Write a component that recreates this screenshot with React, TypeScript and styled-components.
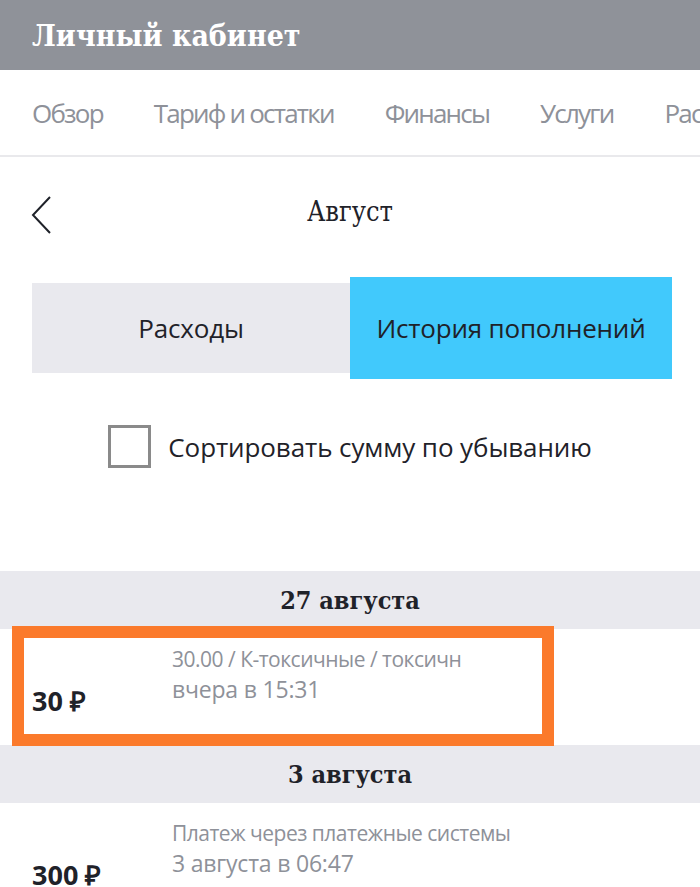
import React from "react";
import styled, { createGlobalStyle } from "styled-components";

const Global = createGlobalStyle`
  html, body { margin: 0; padding: 0; background: #ffffff; }
  body { font-family: "Open Sans", "Liberation Sans", sans-serif; color: #1f2229; overflow: hidden; }
  * { box-sizing: border-box; }
`;

const slab = `"DejaVu Serif Condensed", "DejaVu Serif", serif`;
const sans = `"Open Sans", "Liberation Sans", sans-serif`;

const Page = styled.div`
  width: 700px;
  height: 887px;
  overflow: hidden;
  display: flex;
  flex-direction: column;
`;

const Header = styled.header`
  height: 70px;
  flex: none;
  background: #8f9299;
  display: flex;
  align-items: center;
  padding-left: 32px;
`;

const HeaderTitle = styled.h1`
  margin: 0;
  font-family: ${slab};
  font-stretch: condensed;
  font-weight: 700;
  font-size: 30px;
  color: #ffffff;
  letter-spacing: 0;
`;

const Nav = styled.nav`
  height: 87px;
  flex: none;
  display: flex;
  align-items: center;
  gap: 51px;
  padding-left: 32px;
  border-bottom: 2px solid #e9e9ec;
  white-space: nowrap;
  overflow: hidden;
`;

const NavItem = styled.span`
  font-family: ${sans};
  font-size: 26px;
  color: #8e9199;
  letter-spacing: -1.8px;
`;

const TitleBar = styled.div`
  height: 120px;
  flex: none;
  display: flex;
  align-items: flex-start;
  justify-content: center;
  padding-top: 37px;
  position: relative;
`;

const BackButton = styled.button`
  position: absolute;
  left: 30px;
  top: 38px;
  background: none;
  border: 0;
  padding: 0;
  width: 24px;
  height: 40px;
  display: flex;
`;

const Title = styled.h2`
  margin: 0;
  font-family: ${slab};
  font-stretch: condensed;
  font-weight: 400;
  font-size: 27px;
  line-height: 36px;
  color: #1f2229;
`;

const Tabs = styled.div`
  margin: 0 28px 0 32px;
  display: grid;
  grid-template-columns: 318px 322px;
  align-items: center;
  height: 102px;
  flex: none;
`;

const Tab = styled.div<{ $active?: boolean }>`
  height: ${(p) => (p.$active ? "102px" : "90px")};
  background: ${(p) => (p.$active ? "#41c9fc" : "#e9e9ee")};
  display: flex;
  align-items: center;
  justify-content: center;
  font-family: ${sans};
  font-size: 26px;
  color: #1f2229;
  letter-spacing: -0.2px;
`;

const CheckRow = styled.label`
  margin-top: 46px;
  display: flex;
  align-items: center;
  justify-content: center;
  gap: 17px;
  flex: none;
`;

const Box = styled.span`
  width: 43px;
  height: 43px;
  border: 3px solid #8a8a8a;
  flex: none;
`;

const CheckText = styled.span`
  font-family: ${sans};
  font-size: 26px;
  color: #1f2229;
  letter-spacing: -0.1px;
`;

const Spacer = styled.div`
  height: 103px;
  flex: none;
`;

const DateBand = styled.div`
  height: 58px;
  flex: none;
  background: #e9e9ee;
  display: flex;
  align-items: center;
  justify-content: center;
  font-family: ${slab};
  font-stretch: condensed;
  font-weight: 700;
  font-size: 25px;
  color: #1f2229;
`;

const Row = styled.div`
  height: 116px;
  flex: none;
  position: relative;
  display: grid;
  grid-template-columns: 140px 1fr;
  padding: 16px 0 0 32px;
`;

const Amount = styled.div`
  align-self: start;
  padding-top: 37px;
  font-family: ${sans};
  font-weight: 700;
  font-size: 27px;
  color: #1f2229;
  letter-spacing: 0;
`;

const Details = styled.div`
  display: flex;
  flex-direction: column;
  color: #8e9199;
  font-family: ${sans};
`;

const Desc = styled.div`
  font-size: 21px;
  line-height: 28px;
  letter-spacing: -0.5px;
`;

const When = styled.div`
  font-size: 23px;
  line-height: 32px;
  letter-spacing: -0.2px;
`;

const Highlight = styled.div`
  position: absolute;
  left: 12px;
  top: -3px;
  width: 542px;
  height: 120px;
  border: 12px solid #fb7a2b;
  pointer-events: none;
`;

const items = [
  {
    date: "27 августа",
    amount: "30 ₽",
    desc: "30.00 / К-токсичные / токсичн",
    when: "вчера в 15:31",
    highlight: true,
  },
  {
    date: "3 августа",
    amount: "300 ₽",
    desc: "Платеж через платежные системы",
    when: "3 августа в 06:47",
    highlight: false,
  },
];

export default function App() {
  return (
    <Page>
      <Global />
      <Header>
        <HeaderTitle>Личный кабинет</HeaderTitle>
      </Header>
      <Nav>
        <NavItem>Обзор</NavItem>
        <NavItem>Тариф и остатки</NavItem>
        <NavItem>Финансы</NavItem>
        <NavItem>Услуги</NavItem>
        <NavItem>Расходы</NavItem>
      </Nav>
      <TitleBar>
        <BackButton aria-label="Назад">
          <svg width="24" height="40" viewBox="0 0 24 40">
            <path d="M20 2 L3 20 L20 38" fill="none" stroke="#1f2229" strokeWidth="2" />
          </svg>
        </BackButton>
        <Title>Август</Title>
      </TitleBar>
      <Tabs>
        <Tab>Расходы</Tab>
        <Tab $active>История пополнений</Tab>
      </Tabs>
      <CheckRow>
        <Box />
        <CheckText>Сортировать сумму по убыванию</CheckText>
      </CheckRow>
      <Spacer />
      {items.map((it) => (
        <React.Fragment key={it.date}>
          <DateBand>{it.date}</DateBand>
          <Row>
            <Amount>{it.amount}</Amount>
            <Details>
              <Desc>{it.desc}</Desc>
              <When>{it.when}</When>
            </Details>
            {it.highlight && <Highlight />}
          </Row>
        </React.Fragment>
      ))}
    </Page>
  );
}
